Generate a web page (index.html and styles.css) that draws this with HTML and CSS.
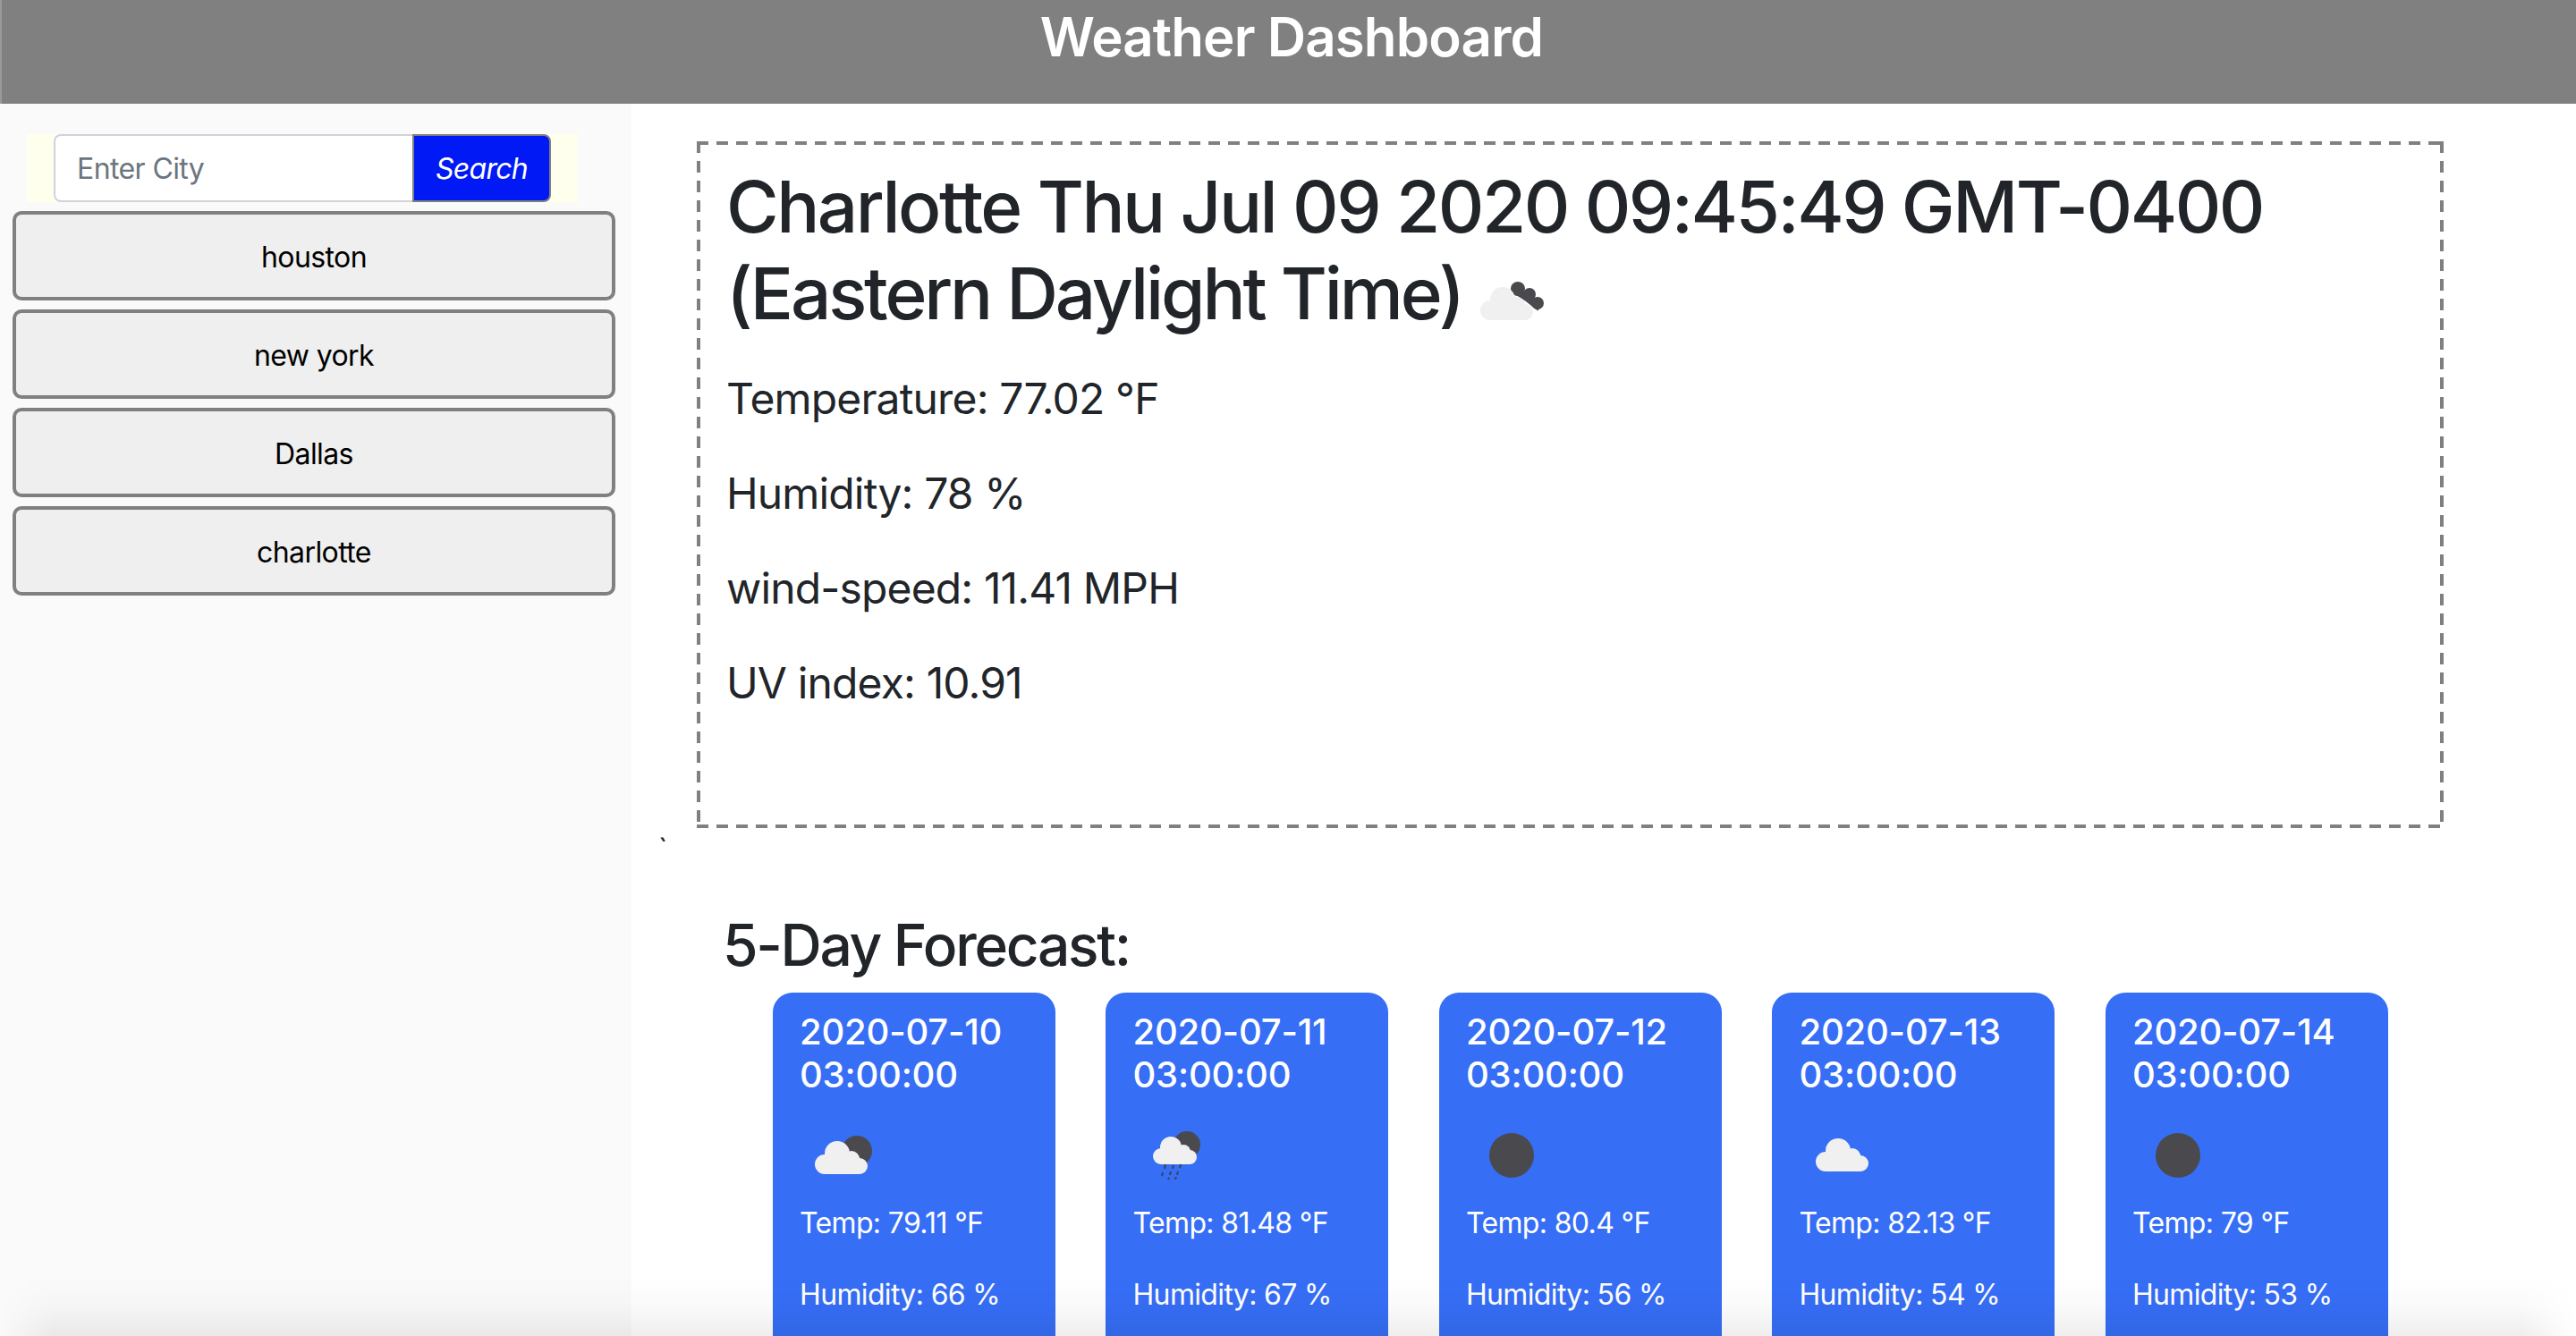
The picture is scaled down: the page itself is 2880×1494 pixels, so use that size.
FILE: index.html
```html
<!DOCTYPE html>
<html lang="en">
<head>
    <meta charset="UTF-8">
    <meta name="viewport" content="width=device-width, initial-scale=1.0">
    <title>Weather Dashboard</title>
    <link rel="stylesheet" href="styles.css">
</head>
<body>
    <svg class="icon-defs" width="0" height="0">
        <defs>
            <g id="cloud">
                <circle cx="42" cy="48" r="14"/>
                <circle cx="58" cy="54" r="9"/>
                <circle cx="28" cy="60" r="11"/>
                <circle cx="67" cy="62" r="9"/>
                <rect x="28" y="52" width="39" height="19"/>
            </g>
            <g id="rain-cloud">
                <circle cx="43" cy="41" r="12"/>
                <circle cx="57" cy="46" r="8"/>
                <circle cx="32" cy="51" r="9"/>
                <circle cx="64" cy="52" r="8"/>
                <rect x="32" y="44" width="32" height="16"/>
            </g>
        </defs>
    </svg>

    <header class="top-bar">
        <h1>Weather Dashboard</h1>
    </header>

    <div class="page">
        <aside class="sidebar">
            <form class="search-form">
                <input class="search-input" type="text" placeholder="Enter City">
                <button class="search-btn" type="button">Search</button>
            </form>
            <button class="city-btn" type="button">houston</button>
            <button class="city-btn" type="button">new york</button>
            <button class="city-btn" type="button">Dallas</button>
            <button class="city-btn" type="button">charlotte</button>
        </aside>

        <main class="content">
            <section class="current">
                <h2 class="current-title">Charlotte Thu Jul 09 2020 09:45:49 GMT-0400 <span class="tz">(Eastern Daylight Time)</span>
                    <svg class="icon icon-inline" viewBox="0 0 100 100">
                        <g class="icon-dark">
                            <circle cx="59" cy="36" r="8"/>
                            <circle cx="72" cy="42" r="7"/>
                            <circle cx="81" cy="52" r="7"/>
                            <path class="icon-band" d="M56 37L70 46L84 57"/>
                        </g>
                        <use href="#cloud" class="icon-light"/>
                    </svg>
                </h2>
                <p>Temperature: 77.02 °F</p>
                <p>Humidity: 78 %</p>
                <p>wind-speed: 11.41 MPH</p>
                <p>UV index: 10.91</p>
            </section>
            <div class="stray">`</div>

            <h2 class="forecast-title">5-Day Forecast:</h2>
            <div class="forecast">
                <div class="card">
                    <h5>2020-07-10 03:00:00</h5>
                    <svg class="icon" viewBox="0 0 100 100">
                        <circle class="icon-dark" cx="64" cy="45" r="17"/>
                        <use href="#cloud" class="icon-light"/>
                    </svg>
                    <p>Temp: 79.11 °F</p>
                    <p>Humidity: 66 %</p>
                </div>
                <div class="card">
                    <h5>2020-07-11 03:00:00</h5>
                    <svg class="icon" viewBox="0 0 100 100">
                        <circle class="icon-dark" cx="61" cy="38" r="15"/>
                        <use href="#rain-cloud" class="icon-light"/>
                        <path class="icon-drops" d="M37 60L36 65M46 61L45 65M54 60L53 64M34 69L33 73M43 68L42 72M51 68L50 72M41 75L40 77M49 74L48 77"/>
                    </svg>
                    <p>Temp: 81.48 °F</p>
                    <p>Humidity: 67 %</p>
                </div>
                <div class="card">
                    <h5>2020-07-12 03:00:00</h5>
                    <svg class="icon" viewBox="0 0 100 100">
                        <circle class="icon-dark" cx="51" cy="50" r="25"/>
                    </svg>
                    <p>Temp: 80.4 °F</p>
                    <p>Humidity: 56 %</p>
                </div>
                <div class="card">
                    <h5>2020-07-13 03:00:00</h5>
                    <svg class="icon" viewBox="0 0 100 100">
                        <use href="#cloud" class="icon-light" x="2" y="-3"/>
                    </svg>
                    <p>Temp: 82.13 °F</p>
                    <p>Humidity: 54 %</p>
                </div>
                <div class="card">
                    <h5>2020-07-14 03:00:00</h5>
                    <svg class="icon" viewBox="0 0 100 100">
                        <circle class="icon-dark" cx="51" cy="50" r="25"/>
                    </svg>
                    <p>Temp: 79 °F</p>
                    <p>Humidity: 53 %</p>
                </div>
            </div>
        </main>
    </div>

    <div class="window-shade"></div>
</body>
</html>
```

FILE: styles.css
```css
body {
    margin: 0;
    height: 100vh;
    overflow: hidden;
    font-family: Inter, "Liberation Sans", sans-serif;
    font-size: 32px;
    line-height: 1.5;
    color: #212529;
    background-color: white;
}
.icon-defs {
    display: block;
    height: 0;
}
.top-bar {
    height: 116px;
    box-sizing: border-box;
    padding: 3px 0 0 6px;
    background-color: #808080;
    border-left: 2px solid #9a9a9a;
    text-align: center;
}
.top-bar h1 {
    margin: 0;
    font-size: 60px;
    font-weight: 600;
    line-height: 77px;
    letter-spacing: -0.9px;
    color: white;
}
.page {
    display: flex;
}
.sidebar {
    width: 706px;
    height: 1378px;
    flex-shrink: 0;
    box-sizing: border-box;
    padding: 34px 18px 0 14px;
    background-color: #fafafa;
}
.search-form {
    display: flex;
    height: 76px;
    margin-left: 16px;
    width: 616px;
    padding: 0 30px;
    box-sizing: border-box;
    background-color: #ffffee;
}
.search-input {
    width: 401px;
    box-sizing: border-box;
    padding: 2px 24px 0;
    font: inherit;
    letter-spacing: -0.6px;
    color: #495057;
    background-color: white;
    border: 2px solid #ced4da;
    border-right: none;
    border-radius: 8px 0 0 8px;
}
.search-input::placeholder {
    color: #6c757d;
}
.search-btn {
    width: 155px;
    padding: 2px 0 0;
    font: inherit;
    font-style: italic;
    letter-spacing: -0.7px;
    color: white;
    background-color: #0019f5;
    border: 2px solid #808080;
    border-radius: 0 8px 8px 0;
}
.city-btn {
    display: block;
    width: 100%;
    height: 100px;
    margin-top: 10px;
    padding-top: 4px;
    font: inherit;
    letter-spacing: -0.6px;
    color: black;
    background-color: #efefef;
    border: 4px solid #808080;
    border-radius: 10px;
}
.content {
    flex: 1;
    min-width: 0;
}
/* the default dashed border is too short in the dash, so it is drawn as four backgrounds */
.current {
    width: 1953px;
    height: 768px;
    box-sizing: border-box;
    margin: 42px 0 0 73px;
    padding: 24px 33px;
    background-image:
        repeating-linear-gradient(to right, #808080 0 13px, transparent 13px 22px),
        repeating-linear-gradient(to right, #808080 0 13px, transparent 13px 22px),
        repeating-linear-gradient(to bottom, #808080 0 13px, transparent 13px 22px),
        repeating-linear-gradient(to bottom, #808080 0 13px, transparent 13px 22px);
    background-size: 100% 4px, 100% 4px, 4px 100%, 4px 100%;
    background-position: top, bottom, left, right;
    background-repeat: no-repeat;
}
.current-title {
    margin: 0 0 22px;
    font-size: 80px;
    font-weight: 500;
    line-height: 97px;
    letter-spacing: -2.5px;
}
.tz {
    letter-spacing: -3.15px;
}
.current p {
    margin: 0 0 32px;
    font-size: 48px;
    line-height: 74px;
    letter-spacing: -0.85px;
}
.stray {
    padding-left: 30px;
}
.forecast-title {
    margin: 44px 0 15px 102px;
    font-size: 64px;
    font-weight: 500;
    line-height: 77px;
    letter-spacing: -2.3px;
}
.forecast {
    display: flex;
    gap: 56.9px;
    margin-left: 158px;
}
.card {
    width: 315.6px;
    height: 500px;
    flex-shrink: 0;
    box-sizing: border-box;
    padding: 20px 30px;
    color: white;
    background-color: #366ef6;
    border-radius: 22px;
}
.card h5 {
    margin: 0 0 16px;
    font-size: 40px;
    font-weight: 500;
    line-height: 48px;
    letter-spacing: -0.2px;
}
.card p {
    margin: 0 0 32px;
    letter-spacing: -0.65px;
}
.card .icon {
    margin-bottom: 2px;
}
.icon {
    display: block;
    width: 100px;
    height: 100px;
}
.icon-inline {
    display: inline-block;
    margin-left: -16px;
    vertical-align: -30px;
}
.icon-dark {
    fill: #4a4a4e;
}
.icon-light {
    fill: #f0f0f0;
}
.icon-band {
    fill: none;
    stroke: #4a4a4e;
    stroke-width: 9;
}
.icon-drops {
    fill: none;
    stroke: #3d4350;
    stroke-width: 2;
}
/* shadow of the window below the page */
.window-shade {
    position: fixed;
    left: 0;
    right: 0;
    bottom: 0;
    height: 66px;
    background: linear-gradient(to bottom, rgba(0,0,0,0), rgba(0,0,0,0.02) 50%, rgba(0,0,0,0.065));
    -webkit-mask-image: linear-gradient(to right, transparent, black 60px, black calc(100% - 60px), transparent);
    mask-image: linear-gradient(to right, transparent, black 60px, black calc(100% - 60px), transparent);
}
```
